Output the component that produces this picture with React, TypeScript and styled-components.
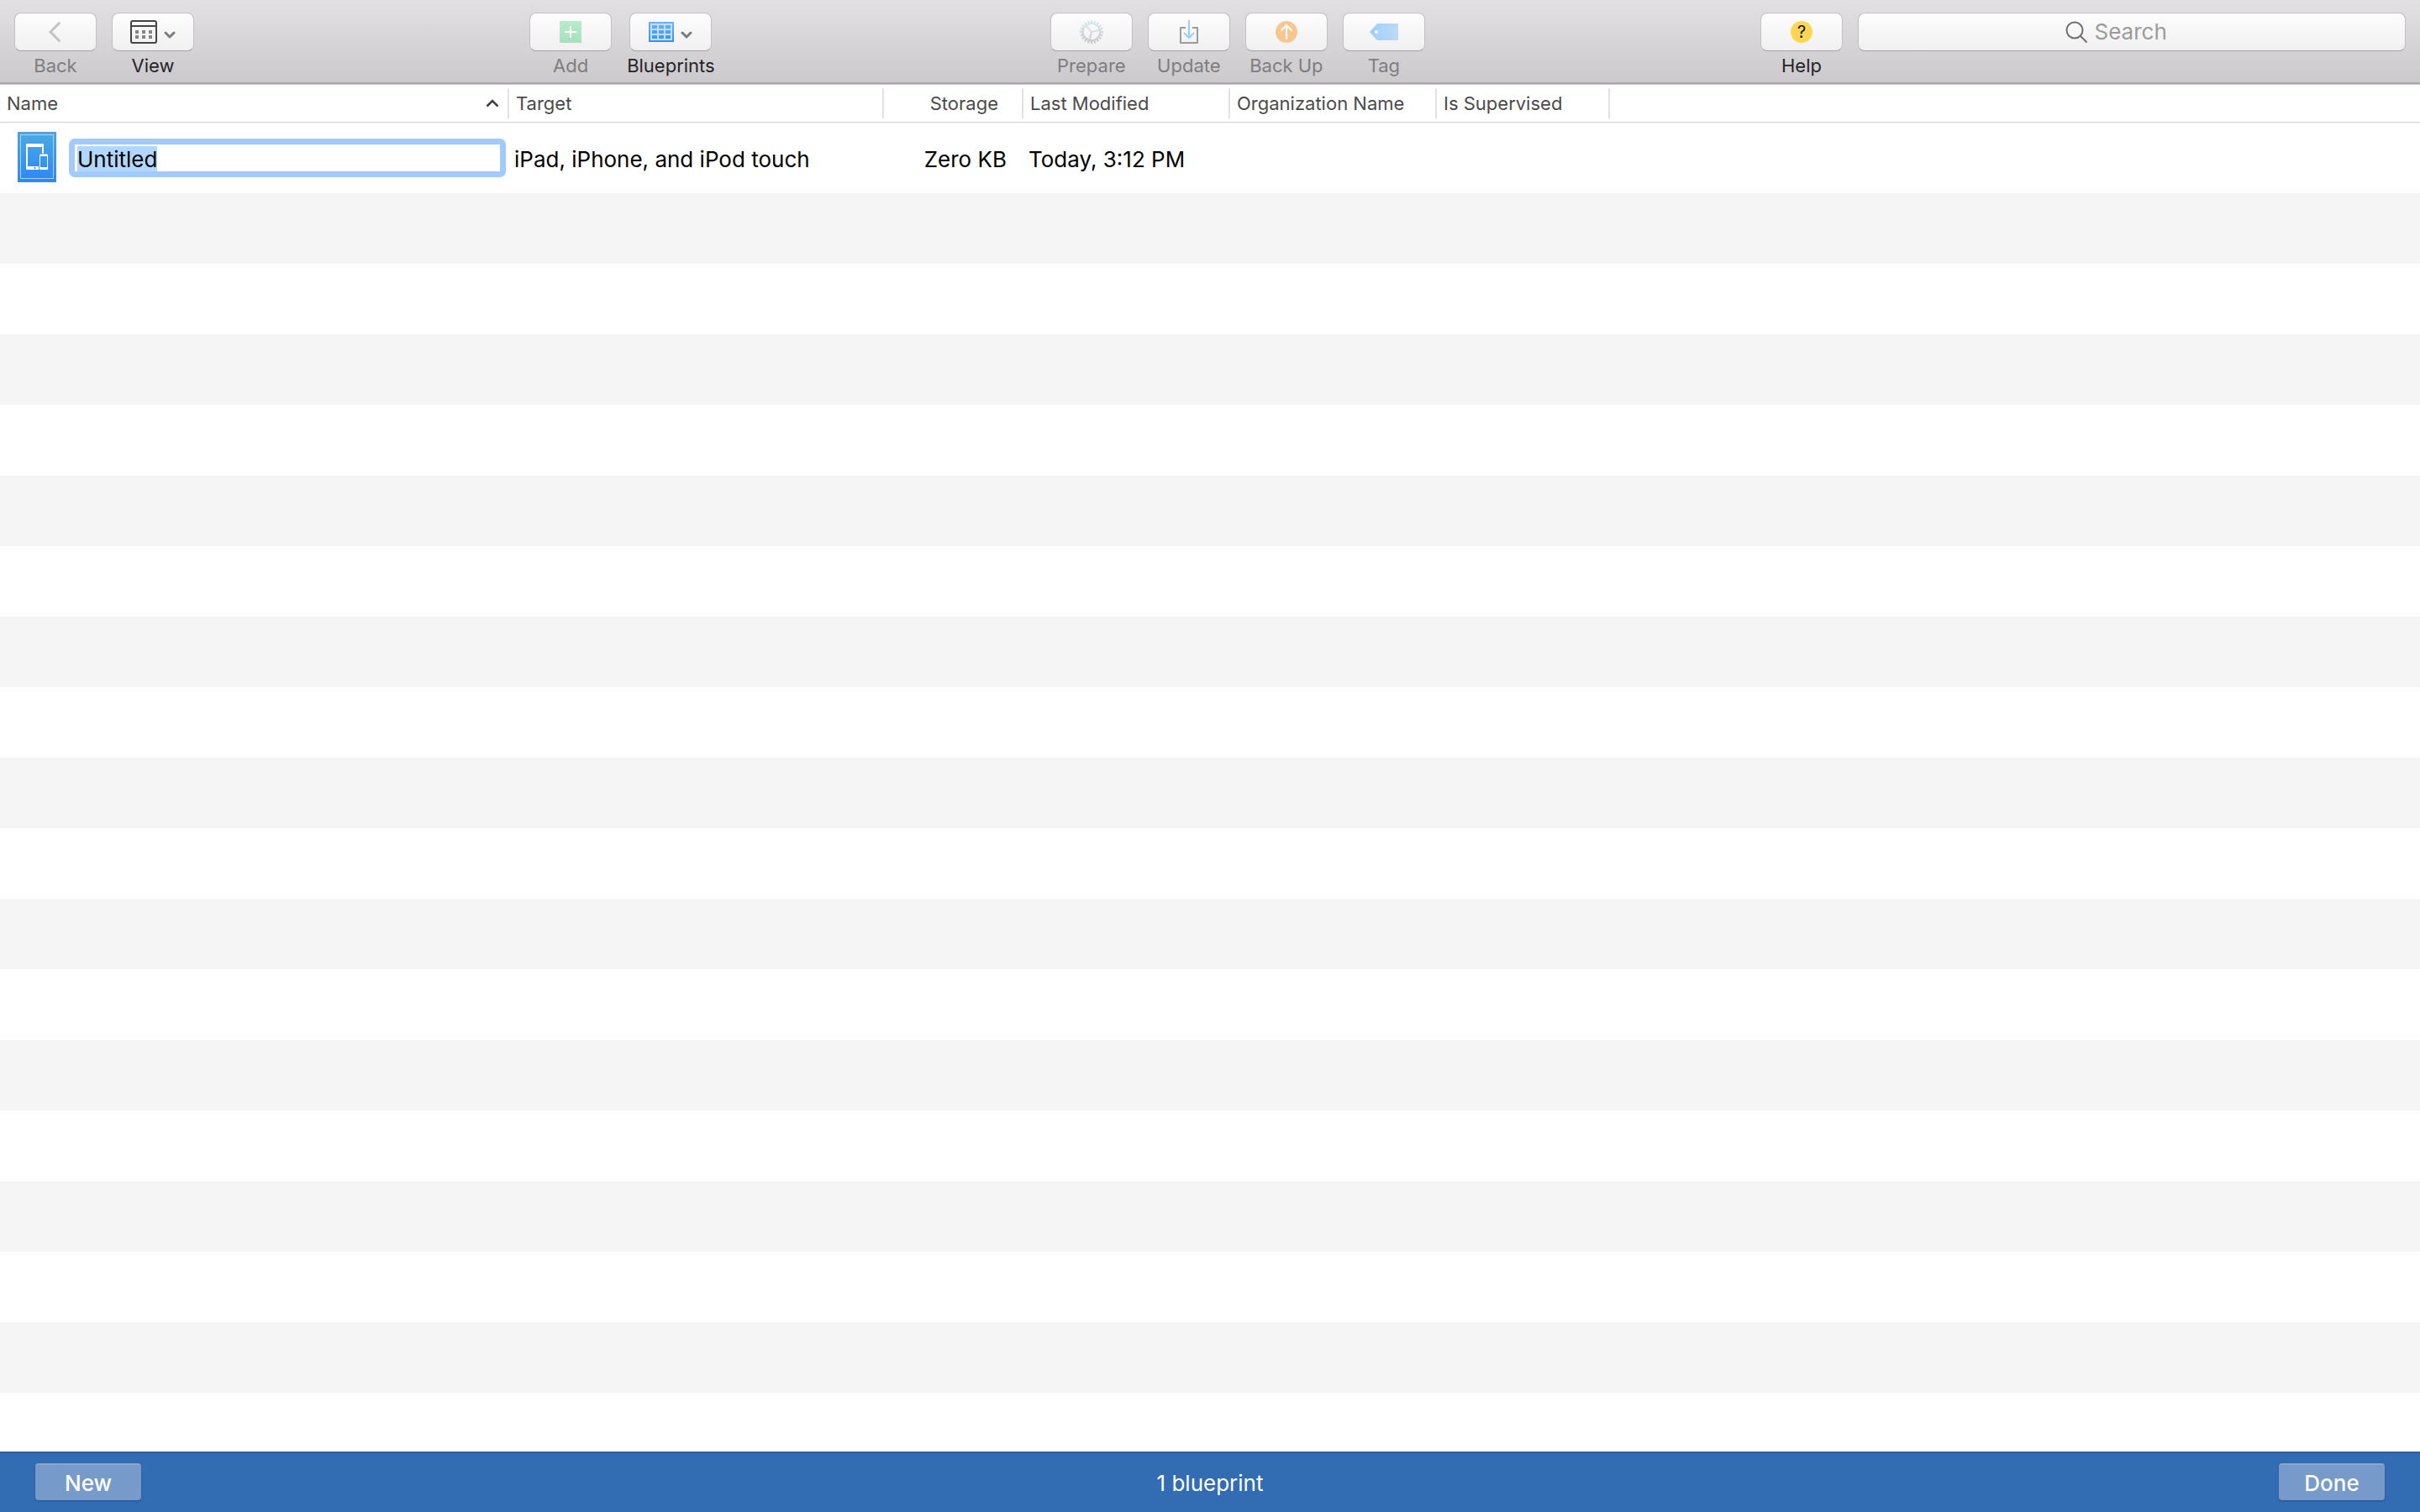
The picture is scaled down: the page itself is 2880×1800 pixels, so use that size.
import React, { useEffect, useRef } from "react";
import styled, { createGlobalStyle } from "styled-components";

const GlobalStyle = createGlobalStyle`
  *, *::before, *::after { box-sizing: border-box; }
  body {
    margin: 0;
    background: #fff;
    color: #000;
    font-family: Inter, "Liberation Sans", sans-serif;
    font-size: 26px;
  }
  button, input { font: inherit; color: inherit; margin: 0; }
`;

const Window = styled.div`
  min-height: 100vh;
  display: flex;
  flex-direction: column;
`;

const Toolbar = styled.header`
  display: flex;
  justify-content: space-between;
  align-items: flex-start;
  height: 101px;
  padding: 15px 17px 0;
  background: linear-gradient(#e2e0e3, #cbc9cc);
  border-bottom: 1px solid #c9c9c9;
  box-shadow: inset 0 -2px 0 #a9a7aa;
`;

const Group = styled.div`
  display: flex;
  gap: 18px;
`;

const Bezel = styled.span`
  display: flex;
  align-items: center;
  justify-content: center;
  gap: 8px;
  width: 98px;
  height: 46px;
  border: 1px solid #c2c0c3;
  border-bottom-color: #a3a1a4;
  border-radius: 8px;
  background: linear-gradient(#fdfdfd, #f0f0f0);
`;

const ToolButton = styled.button`
  display: flex;
  flex-direction: column;
  align-items: center;
  gap: 4px;
  padding: 0;
  border: 0;
  background: none;
  color: #262426;
  font-size: 22px;
  line-height: 26px;

  &:disabled { color: #7f7d80; }
`;

const SearchBox = styled.label`
  display: flex;
  align-items: center;
  justify-content: center;
  gap: 8px;
  width: 652px;
  height: 46px;
  border: 1px solid #c2c0c3;
  border-bottom-color: #a3a1a4;
  border-radius: 8px;
  background: linear-gradient(#fdfdfd, #f0f0f0);
`;

const SearchInput = styled.input`
  width: 124px;
  padding: 0;
  border: 0;
  outline: 0;
  background: none;
  line-height: 32px;

  &::placeholder { color: #9c9c9c; opacity: 1; }
`;

const Table = styled.table`
  width: 100%;
  table-layout: fixed;
  border-collapse: separate;
  border-spacing: 0;
`;

const Col = styled.col<{ $width?: number }>`
  width: ${(p) => (p.$width ? `${p.$width}px` : "auto")};
`;

const HeadCell = styled.th`
  height: 45px;
  padding: 0;
  border-bottom: 1px solid #d2d2d2;
  color: #4b4b4b;
  font-size: 22px;
  font-weight: 400;
  text-align: left;
`;

const HeadLabel = styled.div<{ $end?: boolean }>`
  display: flex;
  align-items: center;
  justify-content: ${(p) => (p.$end ? "flex-end" : "space-between")};
  height: 36px;
  line-height: 26px;
  padding: 0 ${(p) => (p.$end ? 28 : 10)}px 0 8px;
  border-right: 2px solid #e2e2e2;
`;

const Cell = styled.td<{ $end?: boolean }>`
  height: 84px;
  padding: 4px 20px 0 6px;
  line-height: 32px;
  text-align: ${(p) => (p.$end ? "right" : "left")};
  white-space: nowrap;
`;

const NameCell = styled.td`
  height: 84px;
  padding: 0 4px 0 21px;
`;

const NameLayout = styled.div`
  display: flex;
  align-items: center;
  gap: 15px;
`;

const NameInput = styled.input`
  flex: 1;
  min-width: 0;
  height: 46px;
  padding: 2px 3px 0;
  border: 7px solid #a0cbfc;
  border-radius: 7px;
  outline: 0;
  background: #fff;
  line-height: 32px;

  &::selection { background: #b2d7ff; color: #000; }
`;

const EmptyRows = styled.div`
  flex: 1;
  background: repeating-linear-gradient(#f5f5f5 0 84px, #fff 84px 168px);
`;

const Footer = styled.footer`
  display: grid;
  grid-template-columns: 1fr auto 1fr;
  align-items: center;
  height: 72px;
  padding: 0 42px;
  background: #326cb3;
  box-shadow: inset 0 2px 0 #2f5f9e;
  color: #fff;
`;

const Status = styled.span`
  padding-top: 3px;
  line-height: 32px;
`;

const FooterButton = styled.button<{ $end?: boolean }>`
  justify-self: ${(p) => (p.$end ? "end" : "start")};
  width: 126px;
  height: 44px;
  padding: 0;
  border: 0;
  border-top: 2px solid #86a7d0;
  border-radius: 4px;
  background: #769aca;
  box-shadow: 0 1px 2px #1f4f8c;
  color: #fff;
  font-weight: 500;
`;

const Chevron = () => (
  <svg width="14" height="18" viewBox="0 0 14 18" fill="none" stroke="#7c7c7c" strokeWidth="3" strokeLinecap="round" strokeLinejoin="round">
    <path d="M2 10l5 5 5-5" />
  </svg>
);

const BackIcon = () => (
  <svg width="16" height="26" viewBox="0 0 16 26" fill="none" stroke="#c3c3c3" strokeWidth="3" strokeLinecap="round">
    <path d="M12.500 2.500L2 13l10.500 10.500" />
  </svg>
);

const ViewIcon = () => (
  <svg width="32" height="28" viewBox="0 0 32 28">
    <rect x="1" y="1" width="30" height="26" rx="2" fill="none" stroke="#454545" strokeWidth="2" />
    <path d="M1 7h30" stroke="#454545" strokeWidth="2" />
    <path d="M6 12h4v4h-4zM14 12h4v4h-4zM22 12h4v4h-4zM6 18h4v4h-4zM14 18h4v4h-4zM22 18h4v4h-4z" fill="#858585" />
  </svg>
);

const AddIcon = () => (
  <svg width="26" height="26" viewBox="0 0 26 26">
    <defs>
      <linearGradient id="add" x1="0" y1="0" x2="0" y2="1">
        <stop stopColor="#b5ecc9" />
        <stop offset="1" stopColor="#a8dfbc" />
      </linearGradient>
    </defs>
    <rect width="26" height="26" rx="1" fill="url(#add)" />
    <path d="M13 6v14M6 13h14" stroke="#fff" strokeWidth="2" />
  </svg>
);

const GridIcon = () => (
  <svg width="30" height="24" viewBox="0 0 30 24">
    <defs>
      <linearGradient id="grid" gradientUnits="userSpaceOnUse" x1="0" y1="0" x2="0" y2="24">
        <stop stopColor="#6db3fb" />
        <stop offset="1" stopColor="#3390fa" />
      </linearGradient>
    </defs>
    <rect width="30" height="24" fill="url(#grid)" />
    <rect x="2" y="2" width="26" height="20" fill="#c1defd" />
    <path d="M4 4h6v4h-6zM12 4h6v4h-6zM20 4h6v4h-6zM4 10h6v4h-6zM12 10h6v4h-6zM20 10h6v4h-6zM4 16h6v4h-6zM12 16h6v4h-6zM20 16h6v4h-6z" fill="url(#grid)" />
  </svg>
);

const teeth = Array.from({ length: 20 }, (_, i) => i * 18);

const GearIcon = () => (
  <svg width="28" height="28" viewBox="0 0 28 28">
    <defs>
      <linearGradient id="gear" gradientUnits="userSpaceOnUse" x1="0" y1="0" x2="0" y2="28">
        <stop stopColor="#dcebef" />
        <stop offset="1" stopColor="#c4c6c7" />
      </linearGradient>
      <mask id="gearShape" maskUnits="userSpaceOnUse" x="0" y="0" width="28" height="28">
        <g stroke="#fff" fill="none">
          <circle cx="14" cy="14" r="10.200" strokeWidth="2" />
          <path d="M14 14L7.500 6.500M14 14l10-2.500M14 14l-2.500 10" strokeWidth="1.800" />
          {teeth.map((a) => (
            <path key={a} d="M14 0v4" strokeWidth="2.200" transform={`rotate(${a} 14 14)`} />
          ))}
        </g>
      </mask>
    </defs>
    <rect width="28" height="28" fill="url(#gear)" mask="url(#gearShape)" />
  </svg>
);

const UpdateIcon = () => (
  <svg width="22" height="28" viewBox="0 0 22 28" fill="none">
    <path d="M7 9H1v18h20V9h-6" stroke="#9b9b9b" strokeWidth="2" strokeLinejoin="round" />
    <path d="M11 0v20M5 15l6 6 6-6" stroke="#9bcefa" strokeWidth="2" />
  </svg>
);

const BackUpIcon = () => (
  <svg width="26" height="26" viewBox="0 0 26 26">
    <circle cx="13" cy="13" r="13" fill="#f8c78f" />
    <path d="M13 22V5M6.500 11.500L13 5l6.500 6.500" fill="none" stroke="#fff" strokeWidth="2" />
  </svg>
);

const TagIcon = () => (
  <svg width="34" height="20" viewBox="0 0 34 20">
    <defs>
      <linearGradient id="tag">
        <stop stopColor="#9dcff9" />
        <stop offset="1" stopColor="#bddaf7" />
      </linearGradient>
    </defs>
    <path d="M9 0h24q1 0 1 1v18q0 1-1 1H9L0 10z" fill="url(#tag)" />
    <circle cx="8" cy="10" r="2" fill="#fff" />
  </svg>
);

const HelpMark = styled.span`
  width: 26px;
  height: 26px;
  border-radius: 50%;
  background: #fed654;
  color: #111;
  font-size: 20px;
  line-height: 26px;
  text-align: center;
`;

const SearchIcon = () => (
  <svg width="27" height="27" viewBox="0 0 27 27" fill="none" stroke="#6f6f6f" strokeWidth="2">
    <circle cx="11" cy="11" r="9.500" />
    <path d="M18 18l7.500 7.500" />
  </svg>
);

const SortIcon = () => (
  <svg width="16" height="10" viewBox="0 0 16 10" fill="none" stroke="#3f3f3f" strokeWidth="2.500">
    <path d="M1.500 8.500L8 2l6.500 6.500" />
  </svg>
);

const BlueprintIcon = () => (
  <svg width="46" height="62" viewBox="0 0 46 62">
    <defs>
      <linearGradient id="sheet" gradientUnits="userSpaceOnUse" x1="0" y1="0" x2="0" y2="60">
        <stop stopColor="#4aabe0" />
        <stop offset="1" stopColor="#2c86fa" />
      </linearGradient>
    </defs>
    <rect width="46" height="60" fill="url(#sheet)" />
    <rect x=".5" y=".5" width="45" height="59" fill="none" stroke="#5a8fc4" strokeOpacity=".6" />
    <rect x="3.500" y="3.500" width="39" height="52" fill="none" stroke="#a5d0fa" />
    <rect x="10" y="14" width="21" height="31" rx="1" fill="#fff" />
    <rect x="12" y="18" width="17" height="23" fill="url(#sheet)" />
    <rect x="25.500" y="26" width="11" height="19.500" rx="2" fill="#fff" stroke="#3a98ef" />
    <rect x="27" y="29" width="8" height="13" fill="url(#sheet)" />
    <circle cx="20.500" cy="43" r="1" fill="#3a8ff0" />
  </svg>
);

type Tool = { label: string; icon: React.ReactNode; enabled?: boolean; menu?: boolean };

const groups: Tool[][] = [
  [
    { label: "Back", icon: <BackIcon /> },
    { label: "View", icon: <ViewIcon />, enabled: true, menu: true },
  ],
  [
    { label: "Add", icon: <AddIcon /> },
    { label: "Blueprints", icon: <GridIcon />, enabled: true, menu: true },
  ],
  [
    { label: "Prepare", icon: <GearIcon /> },
    { label: "Update", icon: <UpdateIcon /> },
    { label: "Back Up", icon: <BackUpIcon /> },
    { label: "Tag", icon: <TagIcon /> },
  ],
];

const columns = [
  { label: "Name", width: 606, sorted: true },
  { label: "Target", width: 446 },
  { label: "Storage", width: 166, end: true },
  { label: "Last Modified", width: 246 },
  { label: "Organization Name", width: 246 },
  { label: "Is Supervised", width: 206 },
];

const ToolItem = ({ label, icon, enabled, menu }: Tool) => (
  <ToolButton type="button" disabled={!enabled}>
    <Bezel>
      {icon}
      {menu && <Chevron />}
    </Bezel>
    {label}
  </ToolButton>
);

export default function App() {
  const nameRef = useRef<HTMLInputElement>(null);

  useEffect(() => {
    nameRef.current?.focus();
    nameRef.current?.select();
  }, []);

  return (
    <Window>
      <GlobalStyle />
      <Toolbar>
        {groups.map((tools, i) => (
          <Group key={i}>
            {tools.map((tool) => (
              <ToolItem key={tool.label} {...tool} />
            ))}
          </Group>
        ))}
        <Group>
          <ToolItem label="Help" icon={<HelpMark>?</HelpMark>} enabled />
          <SearchBox>
            <SearchIcon />
            <SearchInput type="text" placeholder="Search" aria-label="Search" />
          </SearchBox>
        </Group>
      </Toolbar>
      <Table>
        <colgroup>
          {columns.map((c) => (
            <Col key={c.label} $width={c.width} />
          ))}
          <Col />
        </colgroup>
        <thead>
          <tr>
            {columns.map((c) => (
              <HeadCell key={c.label} scope="col">
                <HeadLabel $end={c.end}>
                  {c.label}
                  {c.sorted && <SortIcon />}
                </HeadLabel>
              </HeadCell>
            ))}
            <HeadCell as="td" />
          </tr>
        </thead>
        <tbody>
          <tr>
            <NameCell>
              <NameLayout>
                <BlueprintIcon />
                <NameInput ref={nameRef} type="text" defaultValue="Untitled" aria-label="Blueprint name" />
              </NameLayout>
            </NameCell>
            <Cell>iPad, iPhone, and iPod touch</Cell>
            <Cell $end>Zero KB</Cell>
            <Cell>Today, 3:12 PM</Cell>
            <Cell />
            <Cell />
            <Cell />
          </tr>
        </tbody>
      </Table>
      <EmptyRows />
      <Footer>
        <FooterButton type="button">New</FooterButton>
        <Status>1 blueprint</Status>
        <FooterButton type="button" $end>Done</FooterButton>
      </Footer>
    </Window>
  );
}
